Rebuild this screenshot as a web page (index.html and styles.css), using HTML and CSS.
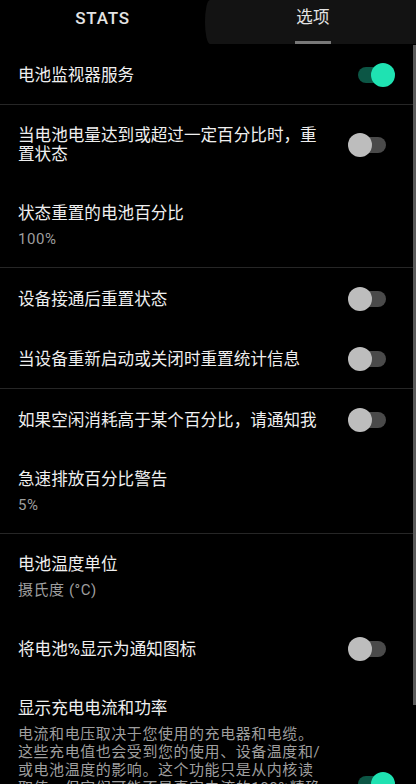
FILE: index.html
```html
<!DOCTYPE html>
<html lang="zh">
<head>
<meta charset="utf-8">
<title>选项</title>
<link rel="stylesheet" href="styles.css">
</head>
<body>
<div class="tabs">
  <div class="tab"><span class="tab-label">STATS</span></div>
  <div class="tab active"><span class="tab-label">选项</span><span class="indicator"></span></div>
</div>
<main class="list">
  <section class="group">
    <div class="pref">
      <div class="text"><div class="title">电池监视器服务</div></div>
      <div class="switch on"></div>
    </div>
  </section>
  <section class="group">
    <div class="pref">
      <div class="text"><div class="title">当电池电量达到或超过一定百分比时，重置状态</div></div>
      <div class="switch"></div>
    </div>
    <div class="pref">
      <div class="text"><div class="title">状态重置的电池百分比</div><div class="summary">100%</div></div>
    </div>
  </section>
  <section class="group">
    <div class="pref">
      <div class="text"><div class="title">设备接通后重置状态</div></div>
      <div class="switch"></div>
    </div>
    <div class="pref">
      <div class="text"><div class="title">当设备重新启动或关闭时重置统计信息</div></div>
      <div class="switch"></div>
    </div>
  </section>
  <section class="group">
    <div class="pref">
      <div class="text"><div class="title">如果空闲消耗高于某个百分比，请通知我</div></div>
      <div class="switch"></div>
    </div>
    <div class="pref">
      <div class="text"><div class="title">急速排放百分比警告</div><div class="summary">5%</div></div>
    </div>
  </section>
  <section class="group plain">
    <div class="pref">
      <div class="text"><div class="title">电池温度单位</div><div class="summary">摄氏度 (°C)</div></div>
    </div>
    <div class="pref">
      <div class="text"><div class="title">将电池%显示为通知图标</div></div>
      <div class="switch"></div>
    </div>
    <div class="pref">
      <div class="text"><div class="title">显示充电电流和功率</div><div class="summary">电流和电压取决于您使用的充电器和电缆。这些充电值也会受到您的使用、设备温度和/或电池温度的影响。这个功能只是从内核读取值，但它们可能不是真实电流的100%精确表示。某些设备可能不报告这些数值，或者报告的数值不准确。如果您看到异常的数值，请关闭此选项。启用此选项可能会增加电池消耗。</div></div>
      <div class="switch on"></div>
    </div>
  </section>
</main>
<div class="scrollbar"></div>
</body>
</html>
```
FILE: styles.css
```css
html, body {
  margin: 0;
  padding: 0;
  background: #000;
}
body {
  font-family: Roboto, "Noto Sans CJK SC", sans-serif;
  height: 784px;
  overflow: hidden;
  position: relative;
}
.tabs {
  display: grid;
  grid-template-columns: 205px 1fr;
  height: 44px;
}
.tab {
  display: flex;
  flex-direction: column;
  align-items: center;
  padding-top: 8px;
  box-sizing: border-box;
}
.tab-label {
  font-size: 17px;
  line-height: 20px;
  font-weight: 500;
  letter-spacing: 0.8px;
  color: #e4e4e4;
}
.tab.active {
  background: #131313;
  padding-left: 5px;
  border-radius: 5px 0 0 5px / 22px 0 0 22px;
}
.tab.active .tab-label {
  font-weight: 400;
  font-size: 16.5px;
  letter-spacing: 0.2px;
}
.indicator {
  margin-top: auto;
  width: 36px;
  height: 3px;
  background: #787878;
}
.list {
  display: flex;
  flex-direction: column;
}
.group {
  border-bottom: 1px solid #262626;
}
.group.plain {
  border-bottom: none;
}
.pref {
  display: flex;
  align-items: center;
  gap: 25px;
  min-height: 60px;
  padding: 21px 20px 19px 18px;
  box-sizing: border-box;
}
.text {
  flex: 0 0 305px;
}
.title {
  font-size: 16.6px;
  line-height: 19px;
  color: #efefef;
}
.summary {
  margin-top: 7px;
  font-size: 15px;
  letter-spacing: 0.55px;
  line-height: 18px;
  color: #9e9e9e;
}
.switch {
  flex: none;
  width: 48px;
  height: 20px;
  position: relative;
}
.switch::before {
  content: "";
  position: absolute;
  left: 10px;
  top: 2px;
  width: 28px;
  height: 16px;
  border-radius: 8px;
  background: #4a4a4a;
}
.switch::after {
  content: "";
  position: absolute;
  left: 0;
  top: -2px;
  width: 24px;
  height: 24px;
  border-radius: 50%;
  background: #bdbdbd;
}
.switch.on::before {
  background: #0c5645;
}
.switch.on::after {
  left: 23px;
  background: #1fe2b2;
}
.scrollbar {
  position: absolute;
  top: 45px;
  right: 0;
  width: 3px;
  height: 660px;
  background: #5a5a5a;
}
```
